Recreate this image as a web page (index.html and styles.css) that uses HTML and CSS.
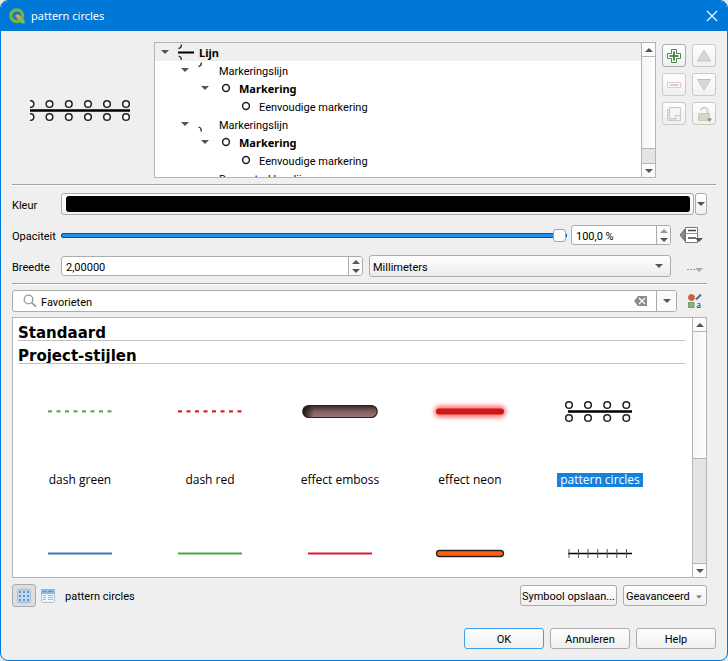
FILE: index.html
```
<!DOCTYPE html>
<html lang="nl">
<head>
<meta charset="utf-8">
<meta name="viewport" content="width=device-width, initial-scale=1">
<title>pattern circles</title>
<link rel="stylesheet" href="styles.css">
</head>
<body>
<svg class="defs" aria-hidden="true">
  <defs>
    <symbol id="down" viewBox="0 0 8 4"><path d="M0 0h8L4 4z" fill="currentColor"/></symbol>
    <symbol id="up" viewBox="0 0 8 4"><path d="M0 4h8L4 0z" fill="currentColor"/></symbol>
    <symbol id="ring" viewBox="0 0 16 16"><circle cx="8" cy="8" r="3.4" fill="#fff" stroke="#222" stroke-width="1.5"/></symbol>
  </defs>
</svg>
<div class="window">
  <header class="titlebar">
    <svg class="logo" width="16" height="16" viewBox="0 0 16 16">
      <circle cx="7.7" cy="7.7" r="5.8" fill="none" stroke="#7fae3c" stroke-width="3.4"/>
      <path d="M8 8h3l4.6 4.6v2.8h-2.8L8 10.800z" fill="#8dbb4a"/>
      <path d="M6.500 6.500h3.200l1.800 1.800-1.400 1.700-3.600-1z" fill="#f0a04a"/>
    </svg>
    <h1 class="title">pattern circles</h1>
    <button class="close" aria-label="Sluiten"><svg width="12" height="12" viewBox="0 0 12 12"><path d="M1 1l10 10M11 1L1 11" stroke="#fff" stroke-width="1.100"/></svg></button>
  </header>
  <main class="content">
    <section class="top">
      <div class="preview">
        <svg width="100" height="24" viewBox="0 0 100 24">
          <path d="M0 12.500h100" stroke="#000" stroke-width="2.400"/>
          <g fill="#fff" stroke="#222" stroke-width="1.500">
            <circle cx="0.500" cy="6" r="3.300"/><circle cx="19.500" cy="6" r="3.300"/><circle cx="38.800" cy="6" r="3.300"/><circle cx="58" cy="6" r="3.300"/><circle cx="77" cy="6" r="3.300"/><circle cx="96" cy="6" r="3.300"/>
            <circle cx="0.500" cy="19" r="3.300"/><circle cx="19.500" cy="19" r="3.300"/><circle cx="38.800" cy="19" r="3.300"/><circle cx="58" cy="19" r="3.300"/><circle cx="77" cy="19" r="3.300"/><circle cx="96" cy="19" r="3.300"/>
          </g>
        </svg>
      </div>
      <div class="tree">
        <ul class="rows">
          <li class="row root strong"><span class="twist"><svg class="arrow"><use href="#down"/></svg></span><svg class="icon" viewBox="0 0 16 16"><path d="M0 8.500h16" stroke="#000" stroke-width="2"/><path d="M3 0.500c.8 2-.4 3.500-2.500 4M0.500 12c2 .6 3.200 2 2.500 4" fill="none" stroke="#222" stroke-width="1.300"/></svg><span class="label">Lijn</span></li>
          <li class="row level1"><span class="twist"><svg class="arrow"><use href="#down"/></svg></span><svg class="icon" viewBox="0 0 16 16"><path d="M3 0.500c.8 2-.4 3.500-2.500 4" fill="none" stroke="#222" stroke-width="1.300"/></svg><span class="label">Markeringslijn</span></li>
          <li class="row level2 strong"><span class="twist"><svg class="arrow"><use href="#down"/></svg></span><svg class="icon"><use href="#ring"/></svg><span class="label">Markering</span></li>
          <li class="row level3"><span class="twist"></span><svg class="icon"><use href="#ring"/></svg><span class="label">Eenvoudige markering</span></li>
          <li class="row level1"><span class="twist"><svg class="arrow"><use href="#down"/></svg></span><svg class="icon" viewBox="0 0 16 16"><path d="M0.500 11c2 .6 3.200 2 2.500 4.500" fill="none" stroke="#222" stroke-width="1.300"/></svg><span class="label">Markeringslijn</span></li>
          <li class="row level2 strong"><span class="twist"><svg class="arrow"><use href="#down"/></svg></span><svg class="icon"><use href="#ring"/></svg><span class="label">Markering</span></li>
          <li class="row level3"><span class="twist"></span><svg class="icon"><use href="#ring"/></svg><span class="label">Eenvoudige markering</span></li>
          <li class="row level1"><span class="twist"></span><svg class="icon" viewBox="0 0 16 16"><path d="M0 9.500h16" stroke="#000" stroke-width="2"/></svg><span class="label">Doorgetrokken lijn</span></li>
        </ul>
        <div class="scroll">
          <button class="step" aria-label="Omhoog"><svg class="arrow"><use href="#up"/></svg></button>
          <div class="groove"><div class="thumb tree-thumb"></div></div>
          <button class="step" aria-label="Omlaag"><svg class="arrow"><use href="#down"/></svg></button>
        </div>
      </div>
      <div class="tools">
        <button class="tool" aria-label="Toevoegen"><svg width="16" height="16" viewBox="0 0 16 16"><path d="M5.500 1.500h5v4h4v5h-4v4h-5v-4h-4v-5h4z" fill="#fff" stroke="#4a8a4d"/><path d="M8 3.500v9M3.500 8h9" stroke="#4a8a4d" stroke-width="2"/></svg></button>
        <button class="tool off" disabled aria-label="Naar boven"><svg width="16" height="16" viewBox="0 0 16 16"><path d="M8 2.500L14.500 13h-13z" fill="#d5d8da" stroke="#bfc2c4"/></svg></button>
        <button class="tool off" disabled aria-label="Verwijderen"><svg width="16" height="16" viewBox="0 0 16 16"><path d="M1.500 5.500h13v5h-13z" fill="#fff" stroke="#dccbca"/><path d="M3.500 8h9" stroke="#dccbca" stroke-width="2"/></svg></button>
        <button class="tool off" disabled aria-label="Naar beneden"><svg width="16" height="16" viewBox="0 0 16 16"><path d="M8 13L14.500 2.500h-13z" fill="#d5d8da" stroke="#bfc2c4"/></svg></button>
        <button class="tool off" disabled aria-label="Dupliceren"><svg width="16" height="16" viewBox="0 0 16 16"><path d="M1.500 3.500h3v9h8v2h-11z" fill="#e2e3e4" stroke="#ccc"/><path d="M3.500 1.500h11v11h-11z" fill="#f5f5f5" stroke="#c8c9ca"/><path d="M9.500 9.500h5v5h-5z" fill="#f2efe2" stroke="#d0cdbf"/></svg></button>
        <button class="tool off" disabled aria-label="Vergrendelen"><svg width="16" height="16" viewBox="0 0 16 16"><path d="M5 4.500C5 1 11.500.500 11.500 4.500V8" fill="none" stroke="#d2d3d3" stroke-width="2"/><path d="M2.500 7.500h11v7h-11z" fill="#dad6c6" stroke="#cbc7b8"/><path d="M11 12.500h5L13.500 16z" fill="#8b8b8b"/></svg></button>
      </div>
    </section>
    <hr class="line">
    <section class="form">
      <label class="caption" for="color">Kleur</label>
      <div class="control wide">
        <button class="color" id="color"><span class="swatch"></span></button>
        <button class="color-menu" aria-label="Kleurmenu"><svg class="arrow"><use href="#down"/></svg></button>
      </div>
      <label class="caption" for="opacity">Opaciteit</label>
      <div class="control">
        <input class="slider" id="opacity" type="range" min="0" max="100" value="100">
        <div class="spin percent">
          <input class="value" type="text" value="100,0 %" aria-label="Opaciteit in procent">
          <div class="steps"><button class="nudge faint" aria-label="Meer"><svg class="arrow"><use href="#up"/></svg></button><button class="nudge" aria-label="Minder"><svg class="arrow"><use href="#down"/></svg></button></div>
        </div>
      </div>
      <button class="override" aria-label="Opaciteit bepalen uit gegevens"><svg width="24" height="18" viewBox="0 0 24 18"><path d="M0 9l5-6v12z" fill="#8a8a8a" stroke="#666"/><path d="M5.500 1.500h12v15h-12z" fill="#fff" stroke="#777"/><path d="M5.500 7.500h12" stroke="#999"/><path d="M8 4.500h8M8 12h8" stroke="#444" stroke-width="1.500"/><path d="M15 12h8l-4 4z" fill="#555"/></svg></button>
      <label class="caption" for="width">Breedte</label>
      <div class="control pair">
        <div class="spin">
          <input class="value" id="width" type="text" value="2,00000">
          <div class="steps"><button class="nudge" aria-label="Breder"><svg class="arrow"><use href="#up"/></svg></button><button class="nudge" aria-label="Smaller"><svg class="arrow"><use href="#down"/></svg></button></div>
        </div>
        <div class="combo">
          <select class="unit" aria-label="Eenheid"><option>Millimeters</option></select>
          <svg class="arrow"><use href="#down"/></svg>
        </div>
      </div>
      <button class="override more" aria-label="Breedte bepalen uit gegevens"><svg width="16" height="8" viewBox="0 0 16 8"><path d="M0 3.500h2M3 3.500h2M6 3.500h2" stroke="#999"/><path d="M8 2h8l-4 4z" fill="#aaa"/></svg></button>
    </section>
    <hr class="line short">
    <section class="filter">
      <div class="search">
        <svg class="lens" width="14" height="14" viewBox="0 0 14 14"><circle cx="5.500" cy="5.500" r="4.300" fill="none" stroke="#999" stroke-width="1.300"/><path d="M8.700 8.700l4.300 4" stroke="#999" stroke-width="1.800"/></svg>
        <input class="query" type="text" value="Favorieten" aria-label="Symbolen filteren">
        <button class="clear" aria-label="Wissen"><svg width="13" height="10" viewBox="0 0 13 10"><path d="M4 0h9v10H4L0 5z" fill="#8c8c8c"/><path d="M5 2l6 6M11 2l-6 6" stroke="#fff" stroke-width="1.200"/></svg></button>
        <button class="drop" aria-label="Filters tonen"><svg class="arrow"><use href="#down"/></svg></button>
      </div>
      <button class="manager" aria-label="Stijlbeheer"><svg width="16" height="16" viewBox="0 0 16 16"><circle cx="4.500" cy="4.500" r="3" fill="#d8622c" stroke="#b34e22" stroke-width=".7"/><path d="M9 6.500L14 1.500" stroke="#4e7399" stroke-width="2.200"/><path d="M1.500 9.500h5.500v5H1.500z" fill="#86b48a" stroke="#6c9b70"/><text x="9.500" y="15" font-family="Liberation Serif, serif" font-size="10" fill="#333">a</text></svg></button>
    </section>
    <section class="gallery">
      <div class="shelf">
        <h2 class="group">Standaard</h2>
        <h2 class="group">Project-stijlen</h2>
        <div class="grid">
          <figure class="item"><svg class="art" viewBox="0 0 80 30"><path d="M8 15.300h64" stroke="#57b04c" stroke-width="2.300" stroke-dasharray="4 4.500"/></svg><figcaption class="name">dash green</figcaption></figure>
          <figure class="item"><svg class="art" viewBox="0 0 80 30"><path d="M8 15.300h64" stroke="#d9202f" stroke-width="2.300" stroke-dasharray="4 4.500"/></svg><figcaption class="name">dash red</figcaption></figure>
          <figure class="item"><svg class="art" viewBox="0 0 80 30"><defs><linearGradient id="emboss" x2="0" y2="1"><stop offset="0" stop-color="#3b2829"/><stop offset=".5" stop-color="#805e5f"/><stop offset="1" stop-color="#a27878"/></linearGradient><linearGradient id="shade"><stop offset="0" stop-color="#1c1112"/><stop offset=".15" stop-color="#1c1112" stop-opacity="0"/></linearGradient></defs><rect x="2.800" y="9.500" width="74.400" height="12" rx="6" fill="url(#emboss)"/><rect x="2.800" y="9.500" width="74.400" height="12" rx="6" fill="url(#shade)" stroke="#2b2021" stroke-width="1.200"/></svg><figcaption class="name">effect emboss</figcaption></figure>
          <figure class="item"><svg class="art" viewBox="0 0 80 30"><defs><filter id="glow" x="-20%" y="-150%" width="140%" height="400%"><feGaussianBlur stdDeviation="2"/></filter></defs><rect x="4" y="9.500" width="72" height="12" rx="6" fill="#ff7878" filter="url(#glow)"/><path d="M9 15.500h62" stroke="#cc171b" stroke-width="6" stroke-linecap="round"/></svg><figcaption class="name">effect neon</figcaption></figure>
          <figure class="item"><svg class="art" viewBox="0 0 80 30"><path d="M8 15.500h64" stroke="#000" stroke-width="2.400"/><g fill="#fff" stroke="#222" stroke-width="1.500"><circle cx="9" cy="9" r="3.300"/><circle cx="28" cy="9" r="3.300"/><circle cx="47.200" cy="9" r="3.300"/><circle cx="66.300" cy="9" r="3.300"/><circle cx="9" cy="22" r="3.300"/><circle cx="28" cy="22" r="3.300"/><circle cx="47.200" cy="22" r="3.300"/><circle cx="66.300" cy="22" r="3.300"/></g></svg><figcaption class="name chosen">pattern circles</figcaption></figure>
          <figure class="item"><svg class="art" viewBox="0 0 80 30"><path d="M8 15.500h64" stroke="#9fbbdd" stroke-width="3"/><path d="M8 15.500h64" stroke="#3f74b0"/></svg></figure>
          <figure class="item"><svg class="art" viewBox="0 0 80 30"><path d="M8 15.500h64" stroke="#a5d9a0" stroke-width="3"/><path d="M8 15.500h64" stroke="#48a33f"/></svg></figure>
          <figure class="item"><svg class="art" viewBox="0 0 80 30"><path d="M8 15.500h64" stroke="#ee8f99" stroke-width="3"/><path d="M8 15.500h64" stroke="#d6172a"/></svg></figure>
          <figure class="item"><svg class="art" viewBox="0 0 80 30"><rect x="6.500" y="12.500" width="67" height="6" rx="3" fill="#ff6010" stroke="#222" stroke-width="1.300"/></svg></figure>
          <figure class="item"><svg class="art" viewBox="0 0 80 30"><path d="M8 15.500h64" stroke="#000" stroke-width="1.300"/><path d="M9 11v9M18.500 11v9M28 11v9M37.700 11v9M47.200 11v9M56.800 11v9M66.500 11v9" stroke="#555"/></svg></figure>
        </div>
      </div>
      <div class="scroll">
        <button class="step" aria-label="Omhoog"><svg class="arrow"><use href="#up"/></svg></button>
        <div class="groove"><div class="thumb list-thumb"></div></div>
        <button class="step" aria-label="Omlaag"><svg class="arrow"><use href="#down"/></svg></button>
      </div>
    </section>
    <section class="status">
      <button class="view on" aria-label="Pictogrammen"><svg width="14" height="14" viewBox="0 0 14 14"><rect x=".5" y=".5" width="13" height="13" rx="1" fill="#c6d8ec" stroke="#9dbcdb"/><path d="M2 3h10M2 7h10M2 11h10" stroke="#5f8fcb" stroke-width="2" stroke-dasharray="2 2"/></svg></button>
      <button class="view" aria-label="Lijst"><svg width="14" height="14" viewBox="0 0 14 14"><rect x=".5" y=".5" width="13" height="13" rx="1" fill="#f0f4f6" stroke="#a9c3da"/><path d="M0 0h14v5H0z" fill="#8db8e0"/><path d="M2 2.500h3M7 2.500h5" stroke="#5b8fc6"/><path d="M2 6.500h3M2 8.500h3M2 10.500h3M7 6.500h5M7 8.500h5M7 10.500h5" stroke="#b4b8b8"/></svg></button>
      <span class="current">pattern circles</span>
      <button class="push save">Symbool opslaan...</button>
      <button class="push advanced">Geavanceerd<svg class="mini"><use href="#down"/></svg></button>
    </section>
    <footer class="actions">
      <button class="push main">OK</button>
      <button class="push">Annuleren</button>
      <button class="push">Help</button>
    </footer>
  </main>
</div>
</body>
</html>
```
FILE: styles.css
```
* { box-sizing: border-box; }
body {
  margin: 0;
  background: #e4e9ee;
  color: #000;
  font: 11px/16px Roboto, "Liberation Sans", sans-serif;
}
button, input, select { font: inherit; color: inherit; margin: 0; padding: 0; }
button { border: 0; background: none; }
svg { display: block; flex: none; }
.defs { position: absolute; width: 0; height: 0; }
.arrow { width: 8px; height: 4px; color: #555; }

.window {
  display: flex;
  flex-direction: column;
  height: 100vh;
  min-height: 560px;
  border: 1px solid #0078d7;
  border-radius: 8px;
  background: #efefef;
  overflow: hidden;
}
.titlebar {
  display: flex;
  align-items: center;
  height: 30px;
  padding: 0 7px 0 8px;
  background: #0078d7;
  color: #fff;
}
.title { flex: 1; margin: 0 0 0 6px; font: 11px/16px "Noto Sans", sans-serif; }
.close { display: flex; padding: 2px; }
.content {
  flex: 1;
  min-height: 0;
  display: flex;
  flex-direction: column;
  padding: 11px;
}

.top { display: flex; gap: 6px; height: 136px; }
.preview { display: flex; align-items: center; justify-content: center; width: 136px; }
.tree, .gallery { display: flex; flex: 1; min-width: 0; border: 1px solid #b4b4b4; background: #fff; overflow: hidden; }
.rows { flex: 1; margin: 0; padding: 0; list-style: none; }
.row { display: flex; align-items: center; height: 18px; white-space: nowrap; }
.root { background: #efefef; }
.label { padding-top: 4px; }
.strong .label { padding-top: 2px; font-family: "Noto Sans", sans-serif; font-weight: bold; }
.level1 { padding-left: 20px; }
.level2 { padding-left: 40px; }
.level3 { padding-left: 60px; }
.twist { display: flex; justify-content: center; width: 20px; margin-right: 3px; }
.row .icon { width: 16px; height: 16px; margin-right: 5px; }

.scroll { display: flex; flex: none; flex-direction: column; width: 14px; border-left: 1px solid #b4b4b4; }
.step { display: flex; align-items: center; justify-content: center; height: 13px; background: #fbfbfb; }
.groove { flex: 1; min-height: 0; border: solid #b4b4b4; border-width: 1px 0; background: #e4e4e4; }
.thumb { border-bottom: 1px solid #b4b4b4; background: linear-gradient(90deg, #f4f4f4, #fff); }
.tree-thumb { height: 87%; }
.list-thumb { height: 55%; }

.tools { display: grid; grid-template-columns: 24px 24px; grid-auto-rows: 23px; gap: 6px; padding-top: 2px; }
.tool { display: flex; align-items: center; justify-content: center; border: 1px solid #acacac; border-radius: 3px; background: linear-gradient(#fefefe, #f0f0f0); }
.off { border-color: #cacaca; }

.line { width: 100%; height: 2px; margin: 6px 0 7px; border: 0; border-top: 1px solid #a0a0a0; background: #fff; flex: none; }
.short { width: auto; margin: 6px 9px 5px 0; }

.form { display: grid; grid-template-columns: 49px 1fr 36px; grid-auto-rows: 22px; row-gap: 9px; align-items: center; margin-right: 9px; }
.caption { white-space: nowrap; padding-top: 3px; }
.control { display: flex; align-items: center; gap: 4px; min-width: 0; }
.wide { grid-column: 2 / 4; gap: 1px; }
.color, .color-menu { height: 22px; border: 1px solid #acacac; border-radius: 3px; background: linear-gradient(#fefefe, #f0f0f0); }
.color { flex: 1; padding: 2px 3px 2px 4px; }
.swatch { display: block; height: 16px; border-radius: 3px; background: #000; }
.color-menu { display: flex; align-items: center; justify-content: center; width: 12px; }
.slider { flex: 1; min-width: 0; height: 14px; appearance: none; background: none; }
.slider::-webkit-slider-runnable-track { height: 5px; border: 1px solid #00569b; border-radius: 2px; background: #1e8fee; }
.slider::-webkit-slider-thumb { appearance: none; width: 13px; height: 13px; margin-top: -5px; border: 1px solid #a4a4a4; border-radius: 3px; background: #fbfbfb; }
.spin { display: flex; flex: 1; min-width: 0; height: 20px; border: 1px solid #acacac; border-radius: 3px; background: #fff; overflow: hidden; }
.percent { flex: none; width: 100px; }
.value { flex: 1; min-width: 0; border: 0; padding: 3px 4px 0; background: none; outline: 0; }
.steps { display: flex; flex-direction: column; width: 14px; border-left: 1px solid #acacac; background: #fafafa; }
.nudge { display: flex; flex: 1; align-items: center; justify-content: center; }
.faint .arrow { color: #999; }
.pair { display: grid; grid-template-columns: 1fr 1fr; gap: 6px; }
.combo { display: flex; align-items: center; height: 22px; padding-right: 7px; border: 1px solid #acacac; border-radius: 3px; background: linear-gradient(#fefefe, #ececec); }
.unit { flex: 1; min-width: 0; border: 0; padding: 3px 3px 0; appearance: none; background: none; outline: 0; }
.override { display: flex; padding-left: 9px; }
.more { padding: 8px 0 0 16px; }

.filter { display: flex; align-items: center; gap: 10px; margin-right: 4px; }
.search { display: flex; flex: 1; align-items: center; height: 22px; border: 1px solid #acacac; border-radius: 3px; background: #fff; overflow: hidden; }
.lens { margin: 0 4px 0 10px; }
.query { flex: 1; min-width: 0; border: 0; padding: 3px 0 0; outline: 0; }
.clear { margin-right: 9px; }
.drop { display: flex; align-items: center; justify-content: center; width: 20px; height: 20px; border-left: 1px solid #acacac; background: #fafafa; }
.manager { width: 25px; }

.gallery { min-height: 0; margin: 5px 9px 6px 0; }
.shelf { flex: 1; min-width: 0; padding: 0 7px 0 5px; overflow: hidden; }
.group { height: 23px; margin: 0; border-bottom: 1px solid #c0c0c0; font: bold 15px/30px "DejaVu Sans", sans-serif; overflow: hidden; }
.grid { display: grid; grid-template-columns: repeat(auto-fill, 130px); grid-auto-rows: 142px; margin: 0 -3px; }
.item { display: flex; flex-direction: column; align-items: center; gap: 47px; margin: 0; padding-top: 32px; }
.art { width: 80px; height: 30px; overflow: visible; }
.name { padding: 0 3px; font: 12px/14px "Open Sans", sans-serif; }
.chosen { background: #1482dc; color: #fff; }

.status { display: flex; align-items: center; margin-right: 9px; }
.view { display: flex; align-items: center; justify-content: center; width: 24px; height: 23px; border: 1px solid transparent; border-radius: 3px; }
.on { border-color: #acacac; background: #dedede; }
.current { flex: 1; margin-left: 5px; padding-top: 3px; }
.push { height: 21px; padding-top: 2px; border: 1px solid #acacac; border-radius: 3px; background: linear-gradient(#fefefe, #f0f0f0); white-space: nowrap; }
.save { width: 97px; margin-right: 6px; }
.advanced { display: flex; align-items: center; justify-content: space-between; width: 84px; padding: 2px 4px 0 2px; }
.mini { width: 6px; height: 4px; color: #777; }
.actions { display: flex; justify-content: flex-end; gap: 6px; margin-top: 21px; }
.actions .push { width: 80px; }
.actions .main { border-color: #3ca0f0; }
```
